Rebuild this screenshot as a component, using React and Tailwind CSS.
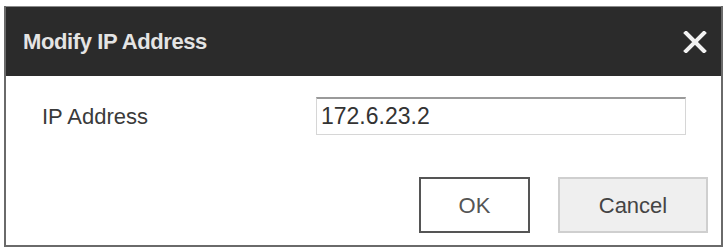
const font = { fontFamily: '"Liberation Sans", Arial, sans-serif' };

const CloseIcon = () => (
  <svg width="24" height="22" viewBox="0 0 24 22" className="block">
    <path d="M3 2 L21 20 M21 2 L3 20" stroke="#f2f2f2" strokeWidth="4" strokeLinecap="square" />
  </svg>
);

export default function App() {
  return (
    <div className="w-[726px] h-[248px] bg-white pt-[6px] pl-[4px] pr-[3px]" style={font}>
      <div className="flex flex-col h-[241px] border-x-2 border-b-2 border-[#6a6a6a] bg-white">
        {/* header */}
        <div className="flex items-center justify-between h-[70px] bg-[#2b2b2b] border-t border-[#8a8a8a] pl-[17px] pr-[14px]">
          <span className="text-[22px] font-bold text-[#e4e4e4] tracking-[-0.4px]">Modify IP Address</span>
          <CloseIcon />
        </div>

        {/* body */}
        <div className="flex flex-col flex-1 pt-[21px]">
          <div className="flex items-center pl-[36px] pr-[35px]">
            <label className="w-[274px] text-[22px] text-[#3a3a3a]">IP Address</label>
            <div className="flex-1 h-[38px] flex items-center border border-[#d6d6d6] border-t-2 border-t-[#9a9a9a] pl-[4px] text-[23px] text-[#333]">
              172.6.23.2
            </div>
          </div>

          <div className="flex justify-end gap-[28px] mt-[42px] pr-[13px]">
            <button className="w-[111px] h-[56px] border-2 border-[#555] bg-white text-[22px] text-[#555]">
              OK
            </button>
            <button className="w-[150px] h-[56px] border-2 border-[#cfcfcf] bg-[#efefef] text-[22px] text-[#444]">
              Cancel
            </button>
          </div>
        </div>
      </div>
    </div>
  );
}
